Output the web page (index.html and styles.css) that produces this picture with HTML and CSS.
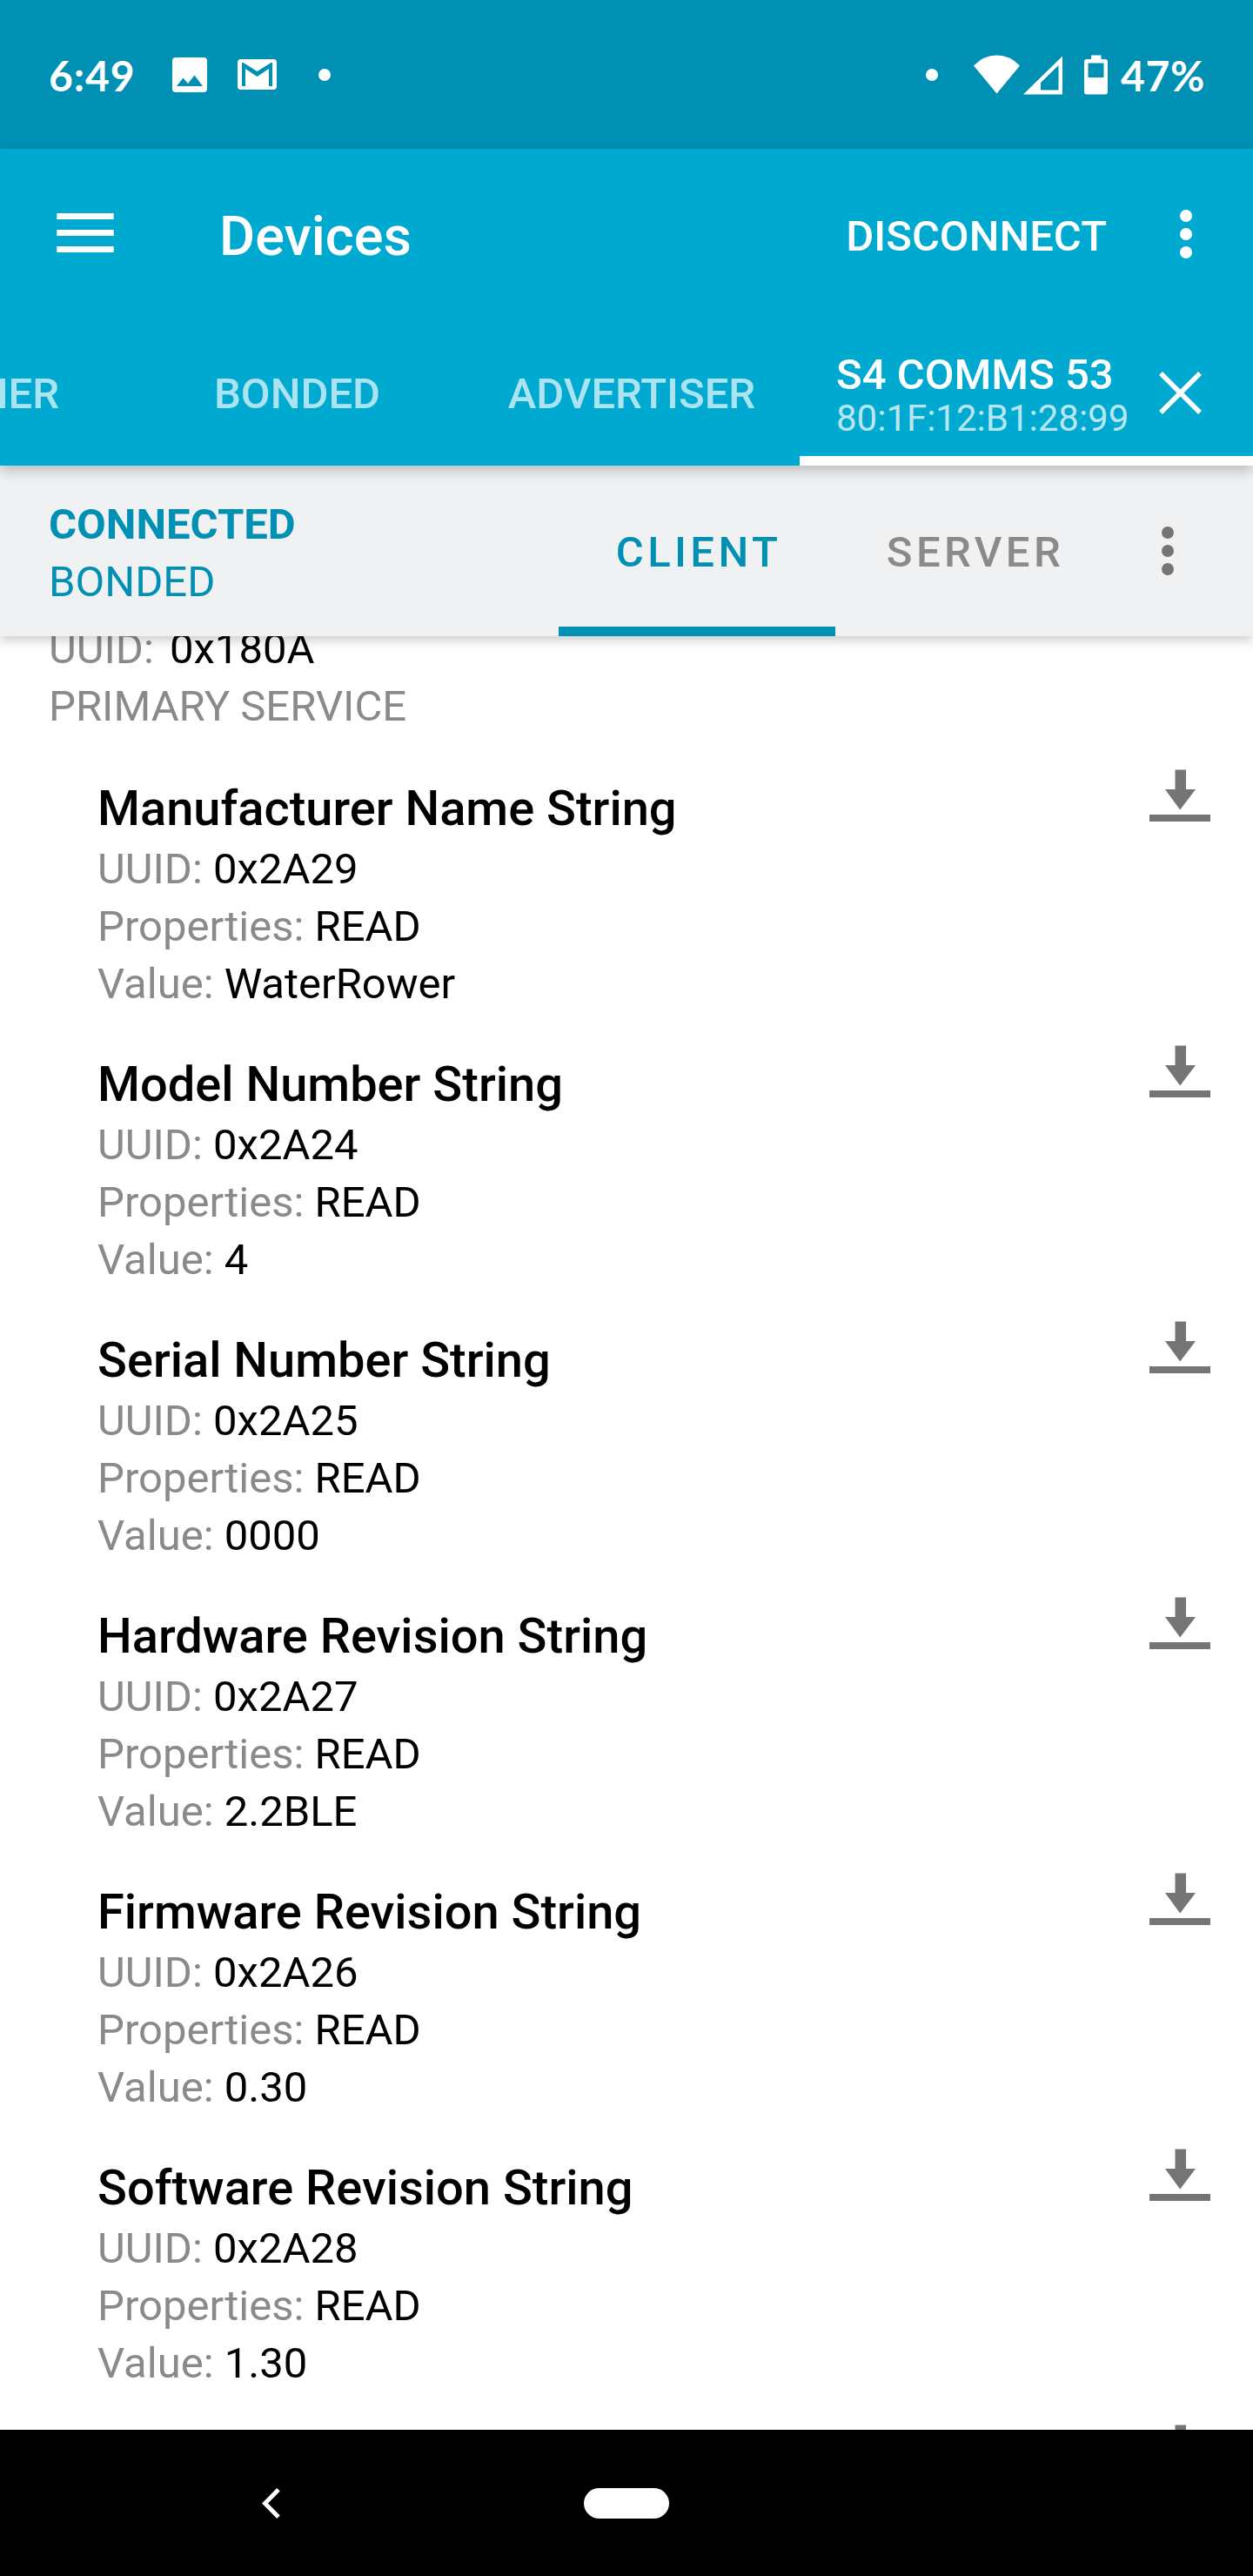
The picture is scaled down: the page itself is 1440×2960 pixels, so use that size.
FILE: index.html
```html
<!DOCTYPE html>
<html lang="en">
<head>
<meta charset="utf-8">
<title>Devices</title>
<link rel="stylesheet" href="styles.css">
</head>
<body>
<svg width="0" height="0" class="defs" aria-hidden="true">
  <symbol id="download" viewBox="0 0 70 60">
    <path d="M29.5 0.5H42V23H53L35.2 46.5L18 23H29.5Z"/>
    <rect x="0" y="52" width="70" height="8"/>
  </symbol>
  <symbol id="more" viewBox="0 0 14 56">
    <circle cx="7" cy="7" r="7"/><circle cx="7" cy="28" r="7"/><circle cx="7" cy="49" r="7"/>
  </symbol>
</svg>
<div class="screen">
  <div class="status-bar">
    <span class="clock">6:49</span>
    <svg class="photo" width="40" height="40" viewBox="0 0 40 40"><path fill-rule="evenodd" d="M4 0H36Q40 0 40 4V36Q40 40 36 40H4Q0 40 0 36V4Q0 0 4 0ZM5 33H35L25.500 20.500L18 30L12.500 23.500Z"/></svg>
    <svg class="mail" width="45" height="35" viewBox="0 0 45 35"><path fill-rule="evenodd" d="M4 0H41Q45 0 45 4V31Q45 35 41 35H4Q0 35 0 31V4Q0 0 4 0ZM5 4V31H9V11L22.500 20L36 11V31H40V4H38.500L22.500 14L6.500 4Z"/></svg>
    <span class="dot"></span>
    <span class="spacer"></span>
    <span class="dot"></span>
    <svg class="wifi" width="53" height="45" viewBox="0 0 53 45"><path d="M0 12.500Q11.500 .5 26.500 .5Q41.500 .5 53 12.500L26.500 44.500Z"/></svg>
    <svg class="signal" width="45" height="45" viewBox="0 0 45 45"><path fill-rule="evenodd" d="M45 .5V44.500H0ZM40.500 11L20 31V39.500H40.500Z"/></svg>
    <svg class="battery" width="27" height="46" viewBox="0 0 27 46"><path fill-rule="evenodd" d="M8 .5H19.500V5H24Q27 5 27 8V42.500Q27 45.500 24 45.500H3Q0 45.500 0 42.500V8Q0 5 3 5H8ZM4.500 9.500V26H22.500V9.500Z"/></svg>
    <span class="percent">47%</span>
  </div>

  <div class="app-bar">
    <div class="toolbar">
      <svg class="menu" width="66" height="45" viewBox="0 0 66 45"><path d="M.3 0H65.700V7H.3ZM.3 19H65.700V26H.3ZM.3 38H65.700V45H.3Z"/></svg>
      <span class="title">Devices</span>
      <span class="action">DISCONNECT</span>
      <svg class="more" width="14" height="56"><use href="#more"/></svg>
    </div>
    <div class="tabs">
      <div class="tab first">SCANNER</div>
      <div class="tab">BONDED</div>
      <div class="tab">ADVERTISER</div>
      <div class="tab active">
        <div class="device">
          <div class="name">S4 COMMS 53</div>
          <div class="address">80:1F:12:B1:28:99</div>
        </div>
        <svg class="close" width="49" height="49" viewBox="0 0 49 49"><path d="M2 2L47 47M47 2L2 47"/></svg>
      </div>
    </div>
  </div>

  <div class="connection">
    <div class="state">
      <div class="connected">CONNECTED</div>
      <div>BONDED</div>
    </div>
    <div class="mode selected">CLIENT</div>
    <div class="mode">SERVER</div>
    <svg class="more-gray" width="14" height="56"><use href="#more"/></svg>
  </div>

  <div class="content">
    <div class="service">
      <div><span class="uuid-label">UUID:</span><b>0x180A</b></div>
      <div>PRIMARY SERVICE</div>
    </div>
    <div class="item">
      <div class="details"><h2>Manufacturer Name String</h2><p>UUID: <b>0x2A29</b></p><p>Properties: <b>READ</b></p><p>Value: <b>WaterRower</b></p></div>
      <svg class="read" width="70" height="60"><use href="#download"/></svg>
    </div>
    <div class="item">
      <div class="details"><h2>Model Number String</h2><p>UUID: <b>0x2A24</b></p><p>Properties: <b>READ</b></p><p>Value: <b>4</b></p></div>
      <svg class="read" width="70" height="60"><use href="#download"/></svg>
    </div>
    <div class="item">
      <div class="details"><h2>Serial Number String</h2><p>UUID: <b>0x2A25</b></p><p>Properties: <b>READ</b></p><p>Value: <b>0000</b></p></div>
      <svg class="read" width="70" height="60"><use href="#download"/></svg>
    </div>
    <div class="item">
      <div class="details"><h2>Hardware Revision String</h2><p>UUID: <b>0x2A27</b></p><p>Properties: <b>READ</b></p><p>Value: <b>2.2BLE</b></p></div>
      <svg class="read" width="70" height="60"><use href="#download"/></svg>
    </div>
    <div class="item">
      <div class="details"><h2>Firmware Revision String</h2><p>UUID: <b>0x2A26</b></p><p>Properties: <b>READ</b></p><p>Value: <b>0.30</b></p></div>
      <svg class="read" width="70" height="60"><use href="#download"/></svg>
    </div>
    <div class="item">
      <div class="details"><h2>Software Revision String</h2><p>UUID: <b>0x2A28</b></p><p>Properties: <b>READ</b></p><p>Value: <b>1.30</b></p></div>
      <svg class="read" width="70" height="60"><use href="#download"/></svg>
    </div>
    <div class="item">
      <div class="details"></div>
      <svg class="read" width="70" height="60"><use href="#download"/></svg>
    </div>
  </div>

  <div class="nav-bar">
    <svg width="21" height="35" viewBox="0 0 21 35"><path d="M19 1.800L3.500 17.500L19 33.200"/></svg>
    <span class="home"></span>
  </div>
</div>
</body>
</html>
```
FILE: styles.css
```css
* { box-sizing: border-box; }
body { margin: 0; background: #fff; font-family: Roboto, "Liberation Sans", sans-serif; font-size: 49px; line-height: 66px; }
.defs { position: absolute; }
svg { display: block; flex: none; fill: #fff; }
.screen { display: flex; flex-direction: column; width: 1440px; height: 2960px; overflow: hidden; }

.status-bar { display: flex; flex: none; align-items: center; height: 171px; padding: 0 56px; background: #0090b3; color: #fff; font-family: Lato, sans-serif; font-weight: 700; font-size: 48px; }
.clock { width: 142px; line-height: 60px; margin-top: 3px; letter-spacing: .9px; }
.mail { margin: 0 48px 0 35px; }
.dot { width: 14px; height: 14px; border-radius: 50%; background: #fff; }
.spacer { flex: 1; }
.wifi { margin: 0 4px 0 41px; }
.signal { margin: 2px 25px 0 0; }
.battery { margin-right: 15px; }
.percent { width: 96px; line-height: 60px; margin-top: 3px; white-space: nowrap; letter-spacing: .7px; }

.app-bar { position: relative; z-index: 2; flex: none; height: 364px; background: #00a9d0; color: #fff; font-weight: 500; box-shadow: 0 6px 14px rgba(0, 0, 0, .22); }
.toolbar { display: flex; align-items: center; height: 196px; padding: 0 70px 0 65px; }
.menu { margin: -3px 121px 0 0; }
.title { flex: 1; font-size: 63px; margin-top: 6px; }
.action { margin: 6px 84px 0 0; }
.tabs { display: grid; grid-template-columns: 150px 383px 386px 521px; height: 168px; }
.tab { display: flex; align-items: center; justify-content: center; padding-top: 4px; color: rgba(255, 255, 255, .67); overflow: hidden; }
.tab.first { justify-content: flex-end; padding-right: 82px; }
.tab.active { justify-content: flex-start; padding: 0 0 0 42px; border-bottom: 11px solid #fff; color: #fff; }
.device { width: 371px; margin-top: 20px; }
.name { line-height: 50px; }
.address { font-size: 42px; font-weight: 400; line-height: 50px; color: rgba(255, 255, 255, .74); }
.close { margin-top: 11px; fill: none; stroke: #fff; stroke-width: 5.5; }

.connection { position: relative; z-index: 1; display: flex; flex: none; height: 196px; background: #eff1f3; box-shadow: 0 5px 12px rgba(0, 0, 0, .2); }
.state { width: 642px; padding: 35px 0 0 56px; color: #0090b3; }
.connected { font-weight: 700; }
.mode { width: 318px; padding: 67px 0 0 4px; text-align: center; font-weight: 500; letter-spacing: 4.4px; color: #8a8a8a; }
.mode.selected { color: #0090b3; border-bottom: 11px solid #0090b3; }
.more-gray { margin: 70px 0 0 57px; fill: #757575; }

.content { flex: 1; min-height: 0; overflow: hidden; color: #8a8a8a; }
.service { margin: -18px 0 47px; padding-left: 56px; }
.uuid-label { display: inline-block; width: 139px; }
b { font-weight: 400; color: #000; }
.item { display: flex; align-items: flex-start; justify-content: space-between; height: 317px; padding: 0 49px 0 112px; }
h2 { margin: 0; font-size: 56px; line-height: 74px; font-weight: 500; color: #000; }
p { margin: 0; }
.read { margin-top: -8px; fill: #757575; }

.nav-bar { display: flex; flex: none; align-items: center; height: 168px; padding-left: 301px; background: #000; }
.nav-bar svg { fill: none; stroke: #fff; stroke-width: 5; }
.home { width: 98px; height: 35px; margin-left: 349px; border-radius: 18px; background: #fff; }
```
